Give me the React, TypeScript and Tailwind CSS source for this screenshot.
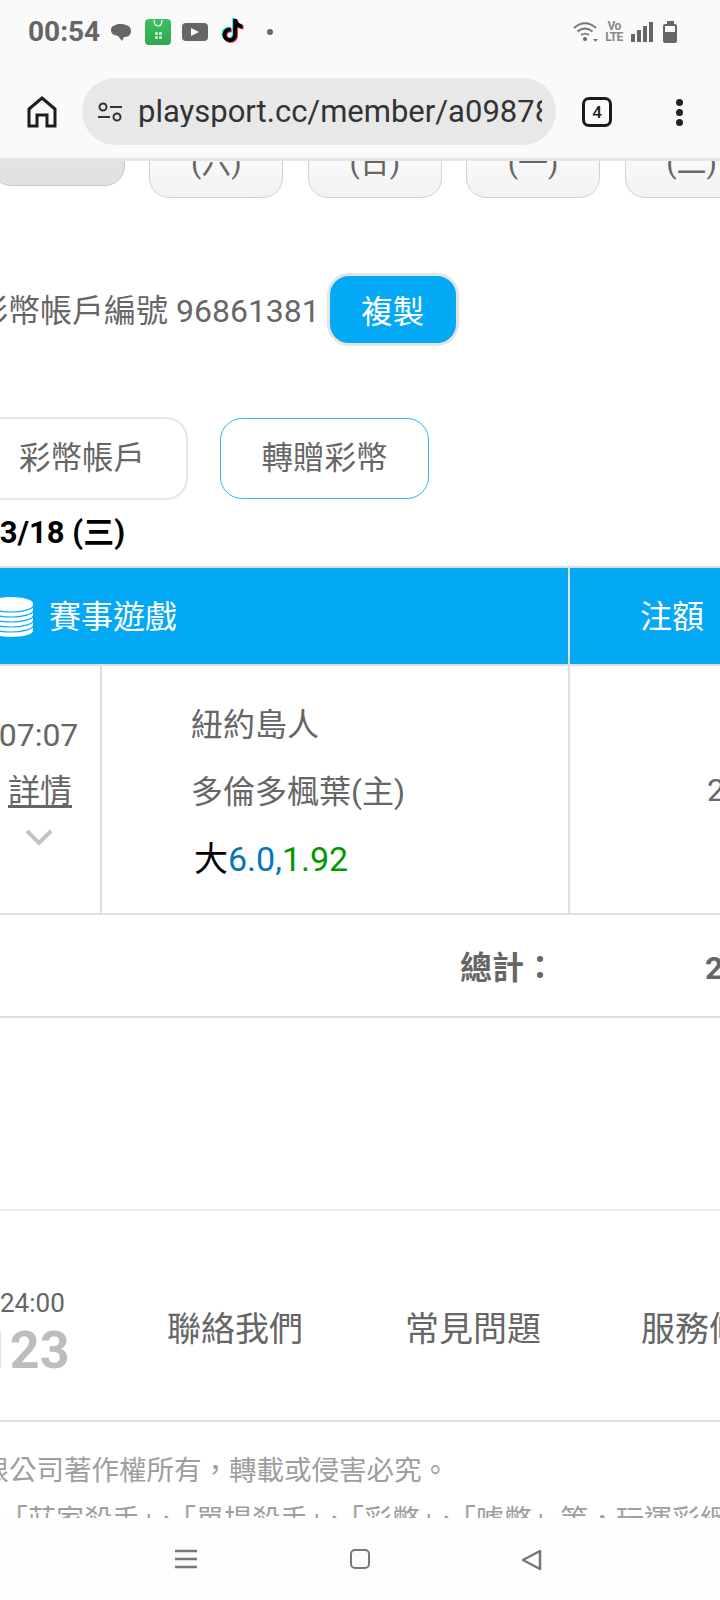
import { FaTiktok } from "react-icons/fa6";

const font = "font-['Roboto','Noto_Sans_CJK_TC',sans-serif]";

const StatusBar = () => (
  <div className="flex h-[64px] items-center pl-[28px] pr-[43px]">
    <span className="text-[28px] font-bold leading-none text-[#666]">00:54</span>
    <svg className="ml-[10px]" width="22" height="22" viewBox="0 0 22 22">
      <path d="M10 3c6 0 11 2 11 7s-4 6-7 6l-2 4-4-5c-4-1-7-2-7-6s4-6 9-6z" fill="#666" />
      <path d="M3 5c2-2 5-3 9-3s6 1 8 3" stroke="#fafafa" strokeWidth="1" fill="none" />
    </svg>
    <div className="ml-[13px] flex h-[26px] w-[26px] flex-col items-center rounded-[4px] bg-linear-to-b from-[#3cc162] to-[#2ea84f]">
      <svg width="14" height="10" viewBox="0 0 14 10">
        <path d="M3 1c0 4 2 6 4 6s4-2 4-6" stroke="#fff" strokeWidth="1.2" fill="none" />
      </svg>
      <div className="mt-[3px] grid grid-cols-2 gap-[1px]">
        <span className="h-[3px] w-[3px] rounded-[1px] bg-[#c9ecd2]" />
        <span className="h-[3px] w-[3px] rounded-[1px] bg-[#c9ecd2]" />
        <span className="h-[3px] w-[3px] rounded-[1px] bg-[#c9ecd2]" />
        <span className="h-[3px] w-[3px] rounded-[1px] bg-[#c9ecd2]" />
      </div>
    </div>
    <div className="ml-[11px] flex h-[18px] w-[26px] items-center justify-center rounded-[4px] bg-[#666]">
      <svg width="10" height="10" viewBox="0 0 10 10">
        <path d="M1 1l8 4-8 4z" fill="#fafafa" />
      </svg>
    </div>
    <div className="relative ml-[13px] h-[26px] w-[24px] text-[23px]">
      <FaTiktok className="absolute left-[-1px] top-[-1px] text-[#25f4ee]" />
      <FaTiktok className="absolute left-[1px] top-[1px] text-[#fe2c55]" />
      <FaTiktok className="absolute left-0 top-0 text-black" />
    </div>
    <span className="ml-[22px] h-[6px] w-[6px] rounded-full bg-[#666]" />
    <svg className="ml-auto" width="26" height="20" viewBox="0 0 26 20">
      <path d="M1 6c7-6 15-6 22 0M4.500 9.500c5-4 10-4 15 0M8 13c3-2 5-2 8 0" stroke="#777" strokeWidth="1.800" fill="none" />
      <circle cx="12" cy="17" r="2" fill="#666" />
      <path d="M20 17h5l-2.500 3z" fill="#777" />
    </svg>
    <div className="ml-[6px] flex w-[18px] flex-col items-center text-[12px] font-bold leading-[11px] tracking-tighter text-[#888]">
      <span>Vo</span>
      <span>LTE</span>
    </div>
    <div className="ml-[8px] flex h-[20px] items-end gap-[2px]">
      <span className="h-[8px] w-[4px] bg-[#666]" />
      <span className="h-[12px] w-[4px] bg-[#666]" />
      <span className="h-[16px] w-[4px] bg-[#666]" />
      <span className="h-[20px] w-[4px] bg-[#666]" />
    </div>
    <div className="ml-[10px] flex w-[14px] flex-col items-center">
      <span className="h-[3px] w-[7px] bg-[#666]" />
      <div className="flex h-[19px] w-[14px] items-end rounded-[2px] border-2 border-[#666]">
        <span className="h-[9px] w-full bg-[#666]" />
      </div>
    </div>
  </div>
);

const Toolbar = () => (
  <div className="flex h-[82px] items-start">
    <svg className="ml-[27px] mt-[32px]" width="30" height="32" viewBox="0 0 30 32">
      <path d="M2 30V13L15 2l13 11v17h-8V19h-10v11z" fill="none" stroke="#1c1c1c" strokeWidth="3" strokeLinejoin="miter" />
    </svg>
    <div className="ml-[25px] mt-[14px] flex h-[67px] w-[474px] items-center rounded-full bg-[#e8e8e8] pl-[15px] pr-[14px]">
      <svg className="shrink-0" width="26" height="22" viewBox="0 0 26 22">
        <circle cx="6" cy="6" r="3.500" fill="none" stroke="#333" strokeWidth="2" />
        <path d="M13 6h12M1 16h12" stroke="#333" strokeWidth="2" />
        <circle cx="20" cy="16" r="3.500" fill="none" stroke="#333" strokeWidth="2" />
      </svg>
      <div className="ml-[15px] min-w-0 overflow-hidden whitespace-nowrap text-[31px] leading-none text-[#333]">
        playsport.cc/member/a09878abc
      </div>
    </div>
    <div className="ml-[26px] mt-[33px] flex h-[30px] w-[30px] items-center justify-center rounded-[7px] border-[3px] border-[#1c1c1c] text-[17px] font-medium leading-none text-[#1c1c1c]">
      4
    </div>
    <div className="ml-[64px] mt-[35px] flex flex-col gap-[3px]">
      <span className="h-[7px] w-[7px] rounded-full bg-[#222]" />
      <span className="h-[7px] w-[7px] rounded-full bg-[#222]" />
      <span className="h-[7px] w-[7px] rounded-full bg-[#222]" />
    </div>
  </div>
);

const days = ["(六)", "(日)", "(一)", "(二)"];

const DayTabs = () => (
  <div className="-mt-[33px] flex h-[70px] items-start">
    <div className="-ml-[9px] h-[58px] w-[134px] shrink-0 rounded-[20px] border border-[#c8c8c8] bg-[#e2e2e2]" />
    {days.map((d) => (
      <div
        key={d}
        className="ml-[24.4px] flex h-[70px] w-[134px] shrink-0 items-center justify-center rounded-[20px] border border-[#d2d2d2] bg-linear-to-b from-white to-[#f2f2f2] text-[30px] leading-none text-[#666]"
      >
        {d}
      </div>
    ))}
  </div>
);

const Coins = () => (
  <svg width="44" height="40" viewBox="0 0 44 40" className="-ml-[11px] shrink-0">
    <path d="M0 6c0-3 10-6 22-6s22 3 22 6v28c0 3-10 6-22 6S0 37 0 34z" fill="#fff" />
    <path
      d="M0 9c0 3 10 6 22 6s22-3 22-6M0 14c0 3 10 6 22 6s22-3 22-6M0 19c0 3 10 6 22 6s22-3 22-6M0 24c0 3 10 6 22 6s22-3 22-6M0 29c0 3 10 6 22 6s22-3 22-6"
      fill="none"
      stroke="#04a9f5"
      strokeWidth="1.200"
    />
  </svg>
);

const BetTable = () => (
  <div className="mt-[18px] w-[720px] text-[#666]">
    <div className="flex h-[100px] border-y-2 border-[#e0e0e0] bg-[#04a9f5] text-[32px] leading-none text-white">
      <div className="flex w-[568px] shrink-0 items-center pt-[1px]">
        <Coins />
        <span className="ml-[16px]">賽事遊戲</span>
      </div>
      <div className="flex flex-1 items-center border-l-2 border-[#e0e0e0] pl-[70px] pt-[1px]">注額</div>
    </div>
    <div className="flex h-[249px] border-b-2 border-[#e0e0e0] text-[32px] leading-none">
      <div className="flex w-[102px] shrink-0 flex-col items-center border-r-2 border-[#e0e0e0] pr-[24px]">
        <span className="mt-[53px] pl-[1px]">07:07</span>
        <span className="ml-[4px] mt-[24px] underline underline-offset-[3px]">詳情</span>
        <svg className="ml-[2px] mt-[22px]" width="28" height="17" viewBox="0 0 28 17">
          <path d="M2 2l12 12L26 2" fill="none" stroke="#c4c4c4" strokeWidth="4" />
        </svg>
      </div>
      <div className="w-[466px] shrink-0 pl-[89px]">
        <div className="mt-[43px]">紐約島人</div>
        <div className="mt-[35px]">多倫多楓葉(主)</div>
        <div className="ml-[3px] mt-[34px] text-[34px]">
          <span className="text-black">大</span>
          <span className="text-[#0277bd]">6.0,</span>
          <span className="text-[#009900]">1.92</span>
        </div>
      </div>
      <div className="flex shrink-0 items-center border-l-2 border-[#e0e0e0] pl-[137px]">2</div>
    </div>
    <div className="flex h-[103px] items-center border-b-2 border-[#e0e0e0] pt-[5px] text-[32px] font-bold leading-none">
      <span className="ml-[460px] w-[245px] shrink-0">總計：</span>
      <span>2</span>
    </div>
  </div>
);

const Footer = () => (
  <div className="mt-[191px] border-t-2 border-[#ececec]">
    <div className="flex h-[211px] items-center border-b-2 border-[#e0e0e0] pt-[26px] text-[#666]">
      <div className="mt-[10px] flex w-[167px] shrink-0 flex-col items-start">
        <span className="text-[26px] leading-none">24:00</span>
        <span className="-ml-[20px] mt-[9px] text-[52px] font-bold leading-none text-[#bdbdbd]">123</span>
      </div>
      <span className="shrink-0 text-[34px] leading-none">聯絡我們</span>
      <span className="ml-[102px] shrink-0 text-[34px] leading-none">常見問題</span>
      <span className="ml-[100px] shrink-0 text-[34px] leading-none">服務條款</span>
    </div>
    <div className="-ml-[18.5px] mt-[35px] whitespace-nowrap text-[27.5px] leading-none text-[#9e9e9e]">
      限公司著作權所有，轉載或侵害必究。
    </div>
    <div className="mt-[22px] whitespace-nowrap text-[28px] leading-none text-[#9e9e9e]">
      「莊家殺手」、「單場殺手」、「彩幣」、「噱幣」等，玩運彩網站
    </div>
  </div>
);

const NavBar = () => (
  <div className="flex h-[82px] shrink-0 items-start bg-[#fdfdfd] pt-[31px]">
    <svg className="ml-[175px]" width="22" height="20" viewBox="0 0 22 20">
      <path d="M0 2h22M0 10h22M0 18h22" stroke="#777" strokeWidth="2.500" />
    </svg>
    <div className="ml-[153px] h-[20px] w-[20px] rounded-[5px] border-[2.5px] border-[#777]" />
    <svg className="ml-[150px]" width="22" height="22" viewBox="0 0 22 22">
      <path d="M20 2v18L3 11z" fill="none" stroke="#777" strokeWidth="2.500" strokeLinejoin="round" />
    </svg>
  </div>
);

const App = () => (
  <div className={`flex h-[1600px] w-[720px] flex-col overflow-hidden bg-white ${font}`}>
    <div className="relative z-10 h-[161px] shrink-0 border-b-[3px] border-[#e6e6e6] bg-[#fafafa]">
      <StatusBar />
      <Toolbar />
    </div>
    <div className="min-h-0 flex-1 overflow-hidden">
      <DayTabs />
      <div className="mt-[75px] flex h-[73px] items-center whitespace-nowrap text-[32px] leading-none text-[#666]">
        <span className="-ml-[24px] pt-[2px]">彩幣帳戶編號 96861381</span>
        <button className="ml-[7px] h-[73px] w-[132px] rounded-[22px] border-[3px] border-[#e4e4e4] bg-[#04a9f5] pt-[7px] text-[31.5px] text-white">
          複製
        </button>
      </div>
      <div className="mt-[71px] flex items-center text-[31.5px] leading-none text-[#666]">
        <div className="-ml-[40px] flex h-[83px] w-[228px] items-center justify-center rounded-[22px] border-[2.5px] border-[#e6e6e6] pl-[16px]">
          彩幣帳戶
        </div>
        <div className="ml-[32px] flex h-[81px] w-[209px] items-center justify-center rounded-[22px] border border-[#29b6f6]">
          轉贈彩幣
        </div>
      </div>
      <div className="-ml-[18px] mt-[17px] text-[31px] font-bold leading-none text-black">03/18 (三)</div>
      <BetTable />
      <Footer />
    </div>
    <NavBar />
  </div>
);

export default App;
